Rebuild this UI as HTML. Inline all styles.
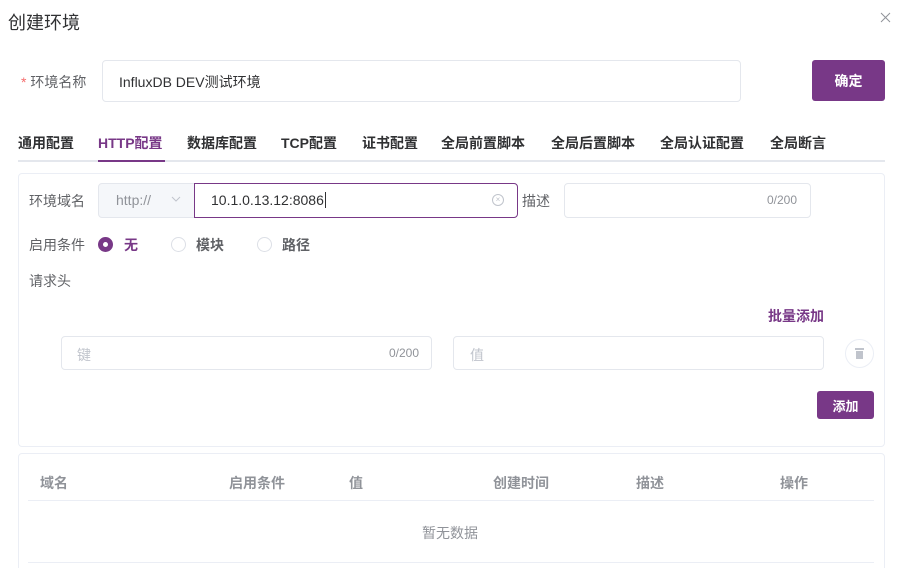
<!DOCTYPE html>
<html style="width:900px;height:568px;overflow:hidden"><head><meta charset="utf-8"><style>
*{box-sizing:border-box;margin:0;padding:0}
body{width:900px;height:568px;overflow:hidden;background:#fff;font-family:"Liberation Sans","Noto Sans CJK SC",sans-serif;color:#303133;position:relative;font-size:14px}
.a{position:absolute;white-space:nowrap}
.box{position:absolute;border:1px solid #e4e7ed;border-radius:4px;background:#fff}
.p{color:#783887}
.btn{position:absolute;background:#783887;color:#fff;border-radius:3px;font-weight:bold;display:flex;align-items:center;justify-content:center}
.g{color:#c0c4cc}
.r{position:absolute;width:15px;height:15px;border:1px solid #dcdfe6;border-radius:50%}
.th{position:absolute;top:473px;color:#909399;font-weight:bold;font-size:14px}
</style></head><body>
<div class="a" style="left:8px;top:9px;font-size:18px;color:#303133">创建环境</div>
<svg class="a" style="left:880px;top:12px" width="11" height="11"><path d="M1 1L10 10M10 1L1 10" stroke="#909399" stroke-width="1"/></svg>

<div class="a" style="left:21px;top:72px;"><span style="color:#f56c6c">*</span> <span style="color:#606266">环境名称</span></div>
<div class="box" style="left:102px;top:60px;width:639px;height:42px"></div>
<div class="a" style="left:119px;top:72px;color:#303133">InfluxDB DEV测试环境</div>
<div class="btn" style="left:812px;top:60px;width:73px;height:41px;font-size:14px">确定</div>

<div class="a" style="left:18px;top:133px;font-weight:bold;color:#303133">通用配置</div>
<div class="a p" style="left:98px;top:133px;font-weight:bold">HTTP配置</div>
<div class="a" style="left:187px;top:133px;font-weight:bold">数据库配置</div>
<div class="a" style="left:281px;top:133px;font-weight:bold">TCP配置</div>
<div class="a" style="left:362px;top:133px;font-weight:bold">证书配置</div>
<div class="a" style="left:441px;top:133px;font-weight:bold">全局前置脚本</div>
<div class="a" style="left:551px;top:133px;font-weight:bold">全局后置脚本</div>
<div class="a" style="left:660px;top:133px;font-weight:bold">全局认证配置</div>
<div class="a" style="left:770px;top:133px;font-weight:bold">全局断言</div>
<div class="a" style="left:18px;top:160px;width:867px;height:2px;background:#e4e7ed"></div>
<div class="a" style="left:98px;top:160px;width:67px;height:2px;background:#783887"></div>

<div class="box" style="left:18px;top:173px;width:867px;height:274px;border-color:#ebeef5"></div>
<div class="a" style="left:29px;top:191px;color:#606266">环境域名</div>
<div class="box" style="left:98px;top:183px;width:98px;height:35px;background:#f5f7fa;border-radius:4px 0 0 4px"></div>
<div class="a" style="left:116px;top:192px;color:#909399">http://</div>
<svg class="a" style="left:171px;top:196px" width="10" height="7"><path d="M1 1L5 5L9 1" stroke="#c0c4cc" fill="none"/></svg>
<div class="box" style="left:194px;top:183px;width:324px;height:35px;border-color:#783887;border-radius:0 4px 4px 0"></div>
<div class="a" style="left:211px;top:192px">10.1.0.13.12:8086<span style="border-left:1px solid #303133;margin-left:1px"></span></div>
<div class="a" style="left:492px;top:194px;width:12px;height:12px;border:1px solid #c0c4cc;border-radius:50%;font-size:8px;color:#c0c4cc;text-align:center;line-height:10px">×</div>
<div class="a" style="left:522px;top:191px;color:#606266">描述</div>
<div class="box" style="left:564px;top:183px;width:247px;height:35px"></div>
<div class="a" style="left:767px;top:193px;font-size:12px;color:#909399">0/200</div>

<div class="a" style="left:29px;top:235px;color:#606266">启用条件</div>
<div class="r" style="left:98px;top:237px;border:5px solid #783887;background:#fff"></div>
<div class="a p" style="left:124px;top:235px;font-weight:bold">无</div>
<div class="r" style="left:171px;top:237px"></div>
<div class="a" style="left:196px;top:235px;font-weight:bold;color:#606266">模块</div>
<div class="r" style="left:257px;top:237px"></div>
<div class="a" style="left:282px;top:235px;font-weight:bold;color:#606266">路径</div>

<div class="a" style="left:29px;top:271px;color:#606266">请求头</div>
<div class="a p" style="left:768px;top:306px;font-weight:bold">批量添加</div>
<div class="box" style="left:61px;top:336px;width:371px;height:34px"></div>
<div class="a g" style="left:77px;top:345px">键</div>
<div class="a" style="left:389px;top:346px;font-size:12px;color:#909399">0/200</div>
<div class="box" style="left:453px;top:336px;width:371px;height:34px"></div>
<div class="a g" style="left:470px;top:345px">值</div>
<div class="a" style="left:845px;top:339px;width:29px;height:29px;border:1px solid #ebeef5;border-radius:50%"></div>
<svg class="a" style="left:855px;top:348px" width="9" height="11"><rect x="0" y="0" width="9" height="2" fill="#c0c4cc"/><rect x="1" y="3" width="7" height="8" fill="#c0c4cc"/></svg>
<div class="btn" style="left:817px;top:391px;width:57px;height:28px;font-size:13px">添加</div>

<div class="box" style="left:18px;top:453px;width:867px;height:130px;border-color:#ebeef5"></div>
<div class="th" style="left:40px">域名</div>
<div class="th" style="left:229px">启用条件</div>
<div class="th" style="left:349px">值</div>
<div class="th" style="left:493px">创建时间</div>
<div class="th" style="left:636px">描述</div>
<div class="th" style="left:780px">操作</div>
<div class="a" style="left:28px;top:500px;width:846px;height:1px;background:#ebeef5"></div>
<div class="a" style="left:422px;top:523px;color:#909399">暂无数据</div>
<div class="a" style="left:28px;top:562px;width:846px;height:1px;background:#ebeef5"></div>
</body></html>
